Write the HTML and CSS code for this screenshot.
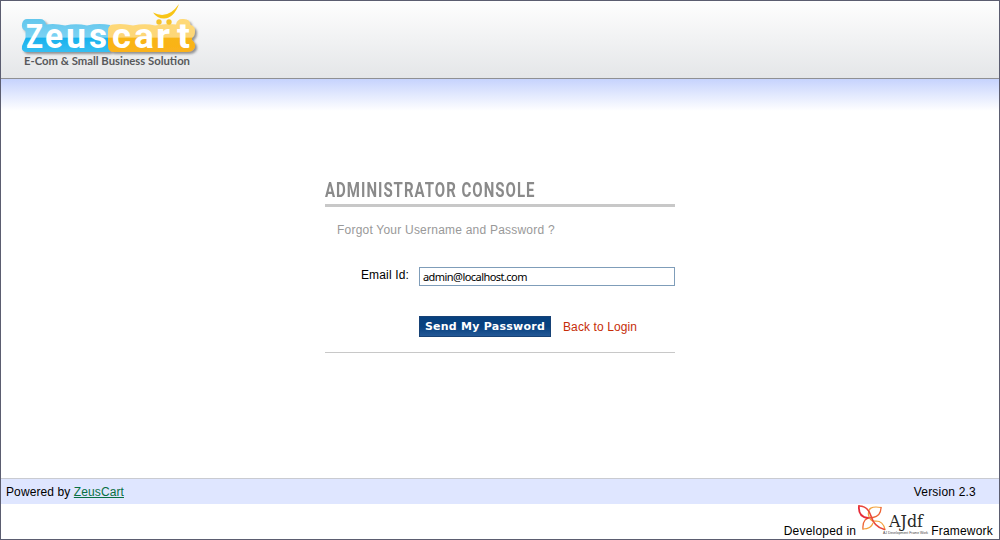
FILE: index.html
```html
<!DOCTYPE html>
<html lang="en">
<head>
<meta charset="utf-8">
<title>Zeuscart Administrator Console</title>
<link rel="stylesheet" href="styles.css">
</head>
<body>
<div class="page">
  <header class="header">
    <svg class="logo" width="205" height="77" viewBox="1 1 205 77" role="img" aria-label="Zeuscart">
      <defs>
        <linearGradient id="blue" gradientUnits="userSpaceOnUse" x1="0" y1="18" x2="0" y2="53">
          <stop offset="0" stop-color="#62c6ec"/><stop offset=".55" stop-color="#7bd2f3"/>
          <stop offset=".57" stop-color="#18b1ed"/><stop offset="1" stop-color="#39bff2"/>
        </linearGradient>
        <linearGradient id="gold" gradientUnits="userSpaceOnUse" x1="0" y1="18" x2="0" y2="53">
          <stop offset="0" stop-color="#ffda78"/><stop offset=".55" stop-color="#fcd678"/>
          <stop offset=".57" stop-color="#f8b517"/><stop offset="1" stop-color="#fbb21b"/>
        </linearGradient>
        <filter id="shadow" x="-10%" y="-20%" width="120%" height="150%">
          <feDropShadow dx="2" dy="2" stdDeviation="1.2" flood-color="#555" flood-opacity=".6"/>
        </filter>
      </defs>
      <g filter="url(#shadow)">
        <path fill="url(#blue)" d="M27 19H40Q45 19 46 24.500Q55 23 65 25.500Q76 23 87 25.500Q98 23 110 25V52H27Q21 52 22 46L25.500 38V31Q21 29 22 24Q23 19 27 19Z"/>
        <path fill="url(#gold)" d="M113 24.500Q122 23 133 25.500Q145 23 155 25.500Q166 23 176 24.500Q177 19 182 19Q190 18 190.500 25Q195 26 195 31Q195 36 192 38V40Q197 44 194 49Q192 52 187 52H114Q108 52 108 46V31Q108 25 113 24.500Z"/>
      </g>
      <g class="logo-name">
        <text class="logo-initial" x="26" y="48" textLength="17" lengthAdjust="spacingAndGlyphs">Z</text>
        <text x="45" y="48" textLength="18" lengthAdjust="spacingAndGlyphs">e</text>
        <text x="66" y="48" textLength="20" lengthAdjust="spacingAndGlyphs">u</text>
        <text x="89" y="48" textLength="18" lengthAdjust="spacingAndGlyphs">s</text>
        <text x="112" y="48" textLength="19" lengthAdjust="spacingAndGlyphs">c</text>
        <text x="134" y="48" textLength="20" lengthAdjust="spacingAndGlyphs">a</text>
        <text x="156" y="48" textLength="14" lengthAdjust="spacingAndGlyphs">r</text>
        <text x="177" y="48" textLength="13" lengthAdjust="spacingAndGlyphs">t</text>
      </g>
      <path fill="#f8c516" d="M153 12.500Q168 20 179 4Q174 18 164 18.500Q157 18.500 153 12.500Z"/>
      <circle cx="159" cy="22" r="2.700" fill="#f5c32b"/><circle cx="169" cy="22" r="2.700" fill="#f5c32b"/>
      <text class="logo-tagline" x="24" y="65" textLength="166" lengthAdjust="spacingAndGlyphs">E-Com &amp; Small Business Solution</text>
    </svg>
  </header>
  <div class="band"></div>
  <main class="main">
    <form class="console">
      <h1 class="title"><span class="title-text">ADMINISTRATOR CONSOLE</span></h1>
      <p class="hint">Forgot Your Username and Password ?</p>
      <div class="field">
        <label class="label" for="email">Email Id:</label>
        <input class="input" id="email" type="text" value="admin@localhost.com">
      </div>
      <div class="actions">
        <button class="button" type="button">Send My Password</button>
        <a class="back">Back to Login</a>
      </div>
    </form>
  </main>
  <footer>
    <div class="footer-bar">
      <span class="powered">Powered by <a class="brand">ZeusCart</a></span>
      <span class="version">Version 2.3</span>
    </div>
    <div class="credit">
      <span class="developed">Developed in</span>
      <svg class="ajdf" width="74" height="35" viewBox="857 504 74 35" role="img" aria-label="AJdf">
        <g fill="none" stroke-linecap="round">
          <path stroke="#f2a13c" stroke-width="1.200" d="M881 507.500Q867 505 868.500 515Q870 522 876 521Q883 521 885 529.500"/>
          <path stroke="#ee6638" stroke-width="1.300" d="M881 507.500Q881 516 873 517.500Q862 517 863 529"/>
          <path stroke="#f2a13c" stroke-width="1.200" d="M863 529Q871 529 873 523"/>
          <path stroke="#e72b39" stroke-width="1.800" d="M859 506Q858 517 868 518"/>
          <path stroke="#e9473c" stroke-width="1.600" d="M859 506Q868 506 871 516Q874 527 884.500 529.500"/>
        </g>
        <text class="ajdf-name" x="889" y="527" textLength="34" lengthAdjust="spacingAndGlyphs">AJdf</text>
        <text class="ajdf-sub" x="883" y="534" textLength="45" lengthAdjust="spacingAndGlyphs">AJ Development Frame Work</text>
      </svg>
      <span class="framework">Framework</span>
    </div>
  </footer>
</div>
</body>
</html>
```
FILE: styles.css
```css
* { box-sizing: border-box; }
body {
  margin: 0;
  font: 12px/14px "Liberation Sans", Arial, sans-serif;
  color: #000;
  background: #fff;
}
.page {
  height: 540px;
  border: 1px solid #5b5d70;
  display: flex;
  flex-direction: column;
}
.header {
  height: 78px;
  border-bottom: 1px solid #8f9093;
  background: linear-gradient(#fefefe, #e4e6e8);
}
.logo { display: block; }
.logo-name { font: bold 35px "Roboto", sans-serif; fill: #fff; }
.logo-initial { font: bold 34px "Liberation Sans Narrow", "Roboto", sans-serif; }
.logo-tagline { font: bold 10.5px Lato, sans-serif; fill: #58595b; }
.band { height: 32px; background: linear-gradient(#c6d3fd, #fff); }
.main { flex: 1; display: flex; justify-content: center; align-items: flex-start; padding-top: 68px; }
.console { width: 350px; height: 174px; border-bottom: 1px solid #c8c8c8; }
.title { margin: 0; height: 28px; padding-top: 1px; border-bottom: 3px solid #c8c8c8; }
.title-text {
  display: inline-block;
  font: bold 19.5px/22px Roboto, sans-serif;
  letter-spacing: 1.3px;
  color: #8a8a8a;
  white-space: nowrap;
  transform: scaleX(.77);
  transform-origin: left;
}
.hint { margin: 16px 0 0 12px; color: #999; letter-spacing: .22px; }
.field { margin-top: 30px; display: flex; height: 19px; }
.label { width: 94px; padding: 1px 10px 0 0; text-align: right; letter-spacing: .15px; }
.input {
  width: 256px;
  height: 19px;
  border: 1px solid #7f9db9;
  padding: 0 2px 1px 3px;
  font: 11px "Noto Sans", sans-serif;
  letter-spacing: -.55px;
  background: #fff;
  color: #000;
}
.actions { margin: 30px 0 0 94px; display: flex; align-items: center; gap: 12px; }
.button {
  width: 132px;
  height: 21px;
  border: 1px solid #174276;
  padding: 0;
  background: linear-gradient(#07417f 50%, #235896);
  color: #fff;
  font: bold 11px "DejaVu Sans", Verdana, sans-serif;
  letter-spacing: .25px;
  white-space: nowrap;
}
.back { color: #c62d08; letter-spacing: .1px; }
.footer-bar {
  height: 26px;
  border-top: 1px solid #c9cbd1;
  background: #dfe6ff;
  display: flex;
  justify-content: space-between;
  align-items: center;
  padding: 0 23px 0 5px;
}
.powered { letter-spacing: .1px; }
.version { letter-spacing: .2px; }
.brand { color: #087043; text-decoration: underline; }
.credit { height: 35px; display: flex; justify-content: flex-end; padding-right: 6px; }
.developed, .framework { padding-top: 20px; letter-spacing: .2px; }
.ajdf { margin-left: 1px; overflow: visible; }
.ajdf-name { font: 17px "DejaVu Serif", serif; fill: #272727; }
.ajdf-sub { font: 4px "Liberation Sans", sans-serif; fill: #444; }
```
